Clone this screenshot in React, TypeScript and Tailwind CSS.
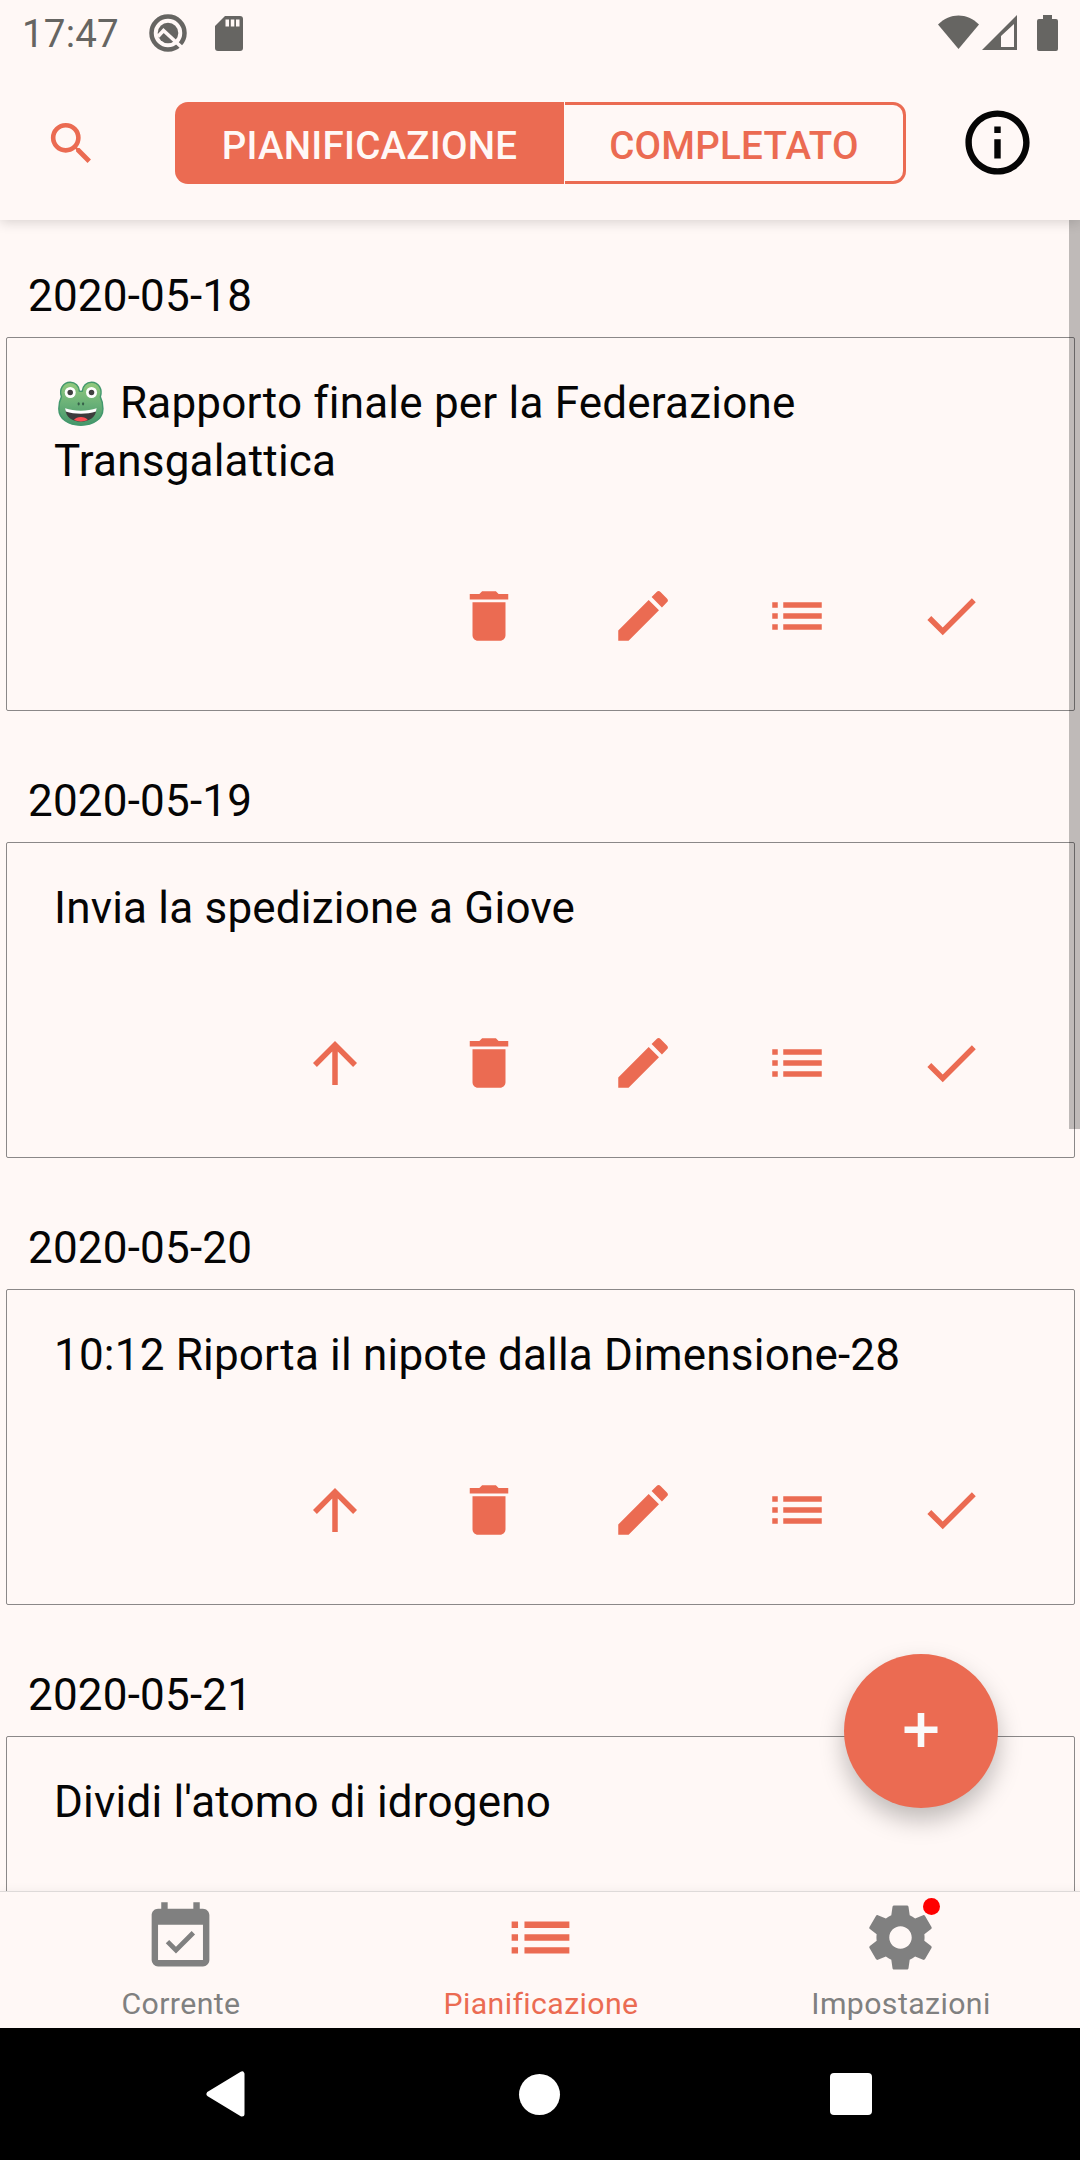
import type { ReactNode } from "react";
import { MdArrowUpward, MdCheck, MdDelete, MdEdit, MdEventAvailable, MdInfoOutline, MdList, MdSearch } from "react-icons/md";

type Task = { date: string; title: string; movable: boolean; frog?: boolean };

const tasks: Task[] = [
  { date: "2020-05-18", title: "Rapporto finale per la Federazione Transgalattica", movable: false, frog: true },
  { date: "2020-05-19", title: "Invia la spedizione a Giove", movable: true },
  { date: "2020-05-20", title: "10:12 Riporta il nipote dalla Dimensione-28", movable: true },
  { date: "2020-05-21", title: "Dividi l'atomo di idrogeno", movable: true },
];

function Frog() {
  return (
    <svg viewBox="0 0 128 128" role="img" aria-label="Rana" className="mr-[16px] ml-[3px] inline-block size-[47px] align-[-9px]">
      <defs>
        <linearGradient id="frog" x1="0" y1="0" x2="0" y2="1">
          <stop offset="0" stopColor="#93ca7d" />
          <stop offset=".5" stopColor="#6ab178" />
          <stop offset="1" stopColor="#45966a" />
        </linearGradient>
      </defs>
      <path d="M36 6C50 6 60 16 61 30C63 31 67 31 69 30C70 16 80 6 94 6c19 0 31 19 24 40 4 8 7 20 7 32 0 28-26 45-60 45S5 106 5 78c0-12 3-24 7-32C5 25 17 6 36 6z" fill="url(#frog)" stroke="#43986d" strokeWidth="4" />
      <circle cx="36" cy="34" r="15" fill="#fff" />
      <circle cx="94" cy="34" r="15" fill="#fff" />
      <circle cx="36" cy="34" r="7.500" fill="#404040" />
      <circle cx="94" cy="34" r="7.500" fill="#404040" />
      <ellipse cx="59" cy="65" rx="3" ry="4.500" fill="#37604a" />
      <ellipse cx="71" cy="65" rx="3" ry="4.500" fill="#37604a" />
      <path d="M23 80c25 9 59 9 84 0-1 21-19 33-42 33S24 101 23 80z" fill="#3c3c3c" />
      <path d="M22 77c25 9 61 9 86 0l-2 9c-24 8-58 8-82 0z" fill="#fff" />
      <path d="M46 109c7-11 31-11 38 0-11 5-27 5-38 0z" fill="#ff4f55" />
    </svg>
  );
}

function TaskItem({ task }: { task: Task }) {
  return (
    <section className="shrink-0">
      <h2 className="flex h-[131px] items-end pb-[12px] pl-[28px] text-[44px] leading-[58px] tracking-[0.2px]">
        {task.date}
      </h2>
      <article className="mr-[5px] ml-[6px] rounded-[2px] border border-[#8b8888] pt-[36px]">
        <p className="mx-[47px] text-[44px] leading-[58px] tracking-[0.2px]">
          {task.frog && <Frog />}
          {task.title}
        </p>
        <div className="mt-[93px] mr-[90px] mb-[61px] flex justify-end gap-[88px] text-[66px] text-[#eb6b52]">
          {task.movable && <MdArrowUpward />}
          <MdDelete />
          <MdEdit />
          <MdList />
          <MdCheck />
        </div>
      </article>
    </section>
  );
}

function SettingsGear() {
  return (
    <svg viewBox="0 0 24 24" fill="currentColor" className="size-[77px]">
      <path d="M19.430 12.980c.04-.32.07-.64.07-.98s-.03-.66-.07-.98l2.110-1.650c.19-.15.24-.42.12-.64l-2-3.460c-.12-.22-.39-.3-.61-.22l-2.490 1c-.52-.4-1.080-.73-1.690-.98l-.38-2.650C14.460 2.180 14.250 2 14 2h-4c-.25 0-.46.18-.49.42l-.38 2.650c-.61.25-1.170.59-1.690.98l-2.490-1c-.23-.09-.49 0-.61.22l-2 3.460c-.13.22-.07.49.12.64l2.110 1.650c-.04.32-.07.65-.07.98s.03.66.07.98l-2.110 1.650c-.19.15-.24.42-.12.64l2 3.460c.12.22.39.3.61.22l2.490-1c.52.4 1.080.73 1.690.98l.38 2.650c.03.24.24.42.49.42h4c.25 0 .46-.18.49-.42l.38-2.650c.61-.25 1.170-.59 1.690-.98l2.490 1c.23.09.49 0 .61-.22l2-3.460c.12-.22.07-.49-.12-.64l-2.110-1.650zM12 15.500c-1.930 0-3.500-1.570-3.500-3.500s1.570-3.500 3.500-3.500 3.500 1.570 3.500 3.500-1.570 3.500-3.500 3.500z" />
    </svg>
  );
}

function Tab({ label, active, badge, children }: { label: string; active?: boolean; badge?: boolean; children: ReactNode }) {
  return (
    <button className={active ? "flex w-[360px] flex-col items-center text-[#eb6b52]" : "flex w-[360px] flex-col items-center text-[#808080]"}>
      <span className="relative mt-[7px] block size-[77px] text-[77px]">
        {children}
        {badge && <i className="absolute -top-px right-0 size-[17px] translate-x-[1px] rounded-full bg-[#ff0000]" />}
      </span>
      <span className="mt-[10px] pl-[2px] text-[30.250px] leading-[36px] tracking-[0.4px]">{label}</span>
    </button>
  );
}

function StatusBar() {
  return (
    <div className="flex h-[66px] items-center pr-[20px] pl-[22px] text-[#666562]">
      <span className="w-[127px] pt-[2px] text-[38.500px] leading-[66px] tracking-[0.2px]">17:47</span>
      <svg viewBox="0 0 38 38" className="size-[38px]">
        <circle cx="19" cy="19" r="16.500" fill="none" stroke="currentColor" strokeWidth="4.500" />
        <circle cx="19" cy="19" r="10.300" fill="currentColor" />
        <path d="M9 22.500L14.500 16.500L34 34.500" fill="none" stroke="#fff8f6" strokeWidth="3.600" />
      </svg>
      <svg viewBox="0 0 28 35" className="ml-[28px] h-[35px] w-[28px]">
        <path d="M10 0h15a3 3 0 0 1 3 3v29a3 3 0 0 1-3 3H3a3 3 0 0 1-3-3V10z" fill="currentColor" />
        <path d="M10.500 3.500h3.500v7h-3.500zM15.800 3.500h3.500v7h-3.500zM21 3.500h3.500v7H21z" fill="#fff8f6" />
      </svg>
      <svg viewBox="0 0 122 38" className="ml-auto h-[38px] w-[122px]" fill="currentColor">
        <path d="M0 10.500C12-1.500 29-1.500 41 10.500L20.500 35z" />
        <path fillRule="evenodd" d="M44 36L79 1v35zM63 33h13V10L63 22z" />
        <path d="M105 1h9v4h4a2 2 0 0 1 2 2v28a2 2 0 0 1-2 2h-17a2 2 0 0 1-2-2V7a2 2 0 0 1 2-2h4z" />
      </svg>
    </div>
  );
}

export default function App() {
  return (
    <div className="flex h-[2160px] w-[1080px] flex-col overflow-hidden bg-[#fff8f6] font-['Roboto',sans-serif] text-[#050505]">
      <header className="relative z-10 h-[220px] shrink-0 bg-[#fff8f6] shadow-[0_2px_12px_rgba(0,0,0,0.16)]">
        <StatusBar />
        <div className="flex h-[154px] items-center pr-[44px] pl-[44px]">
          <MdSearch className="text-[55px] text-[#eb6b52]" />
          <div className="ml-[76px] flex h-[82px] text-[38.500px] font-medium tracking-[0.25px]">
            <button className="w-[389px] rounded-l-[13px] bg-[#eb6b52] pt-[5px] text-[#fff8f6]">PIANIFICAZIONE</button>
            <button className="ml-px w-[341px] rounded-r-[13px] border-[3px] border-l-0 border-[#eb6b52] pt-[5px] text-[#eb6b52]">COMPLETATO</button>
          </div>
          <MdInfoOutline className="ml-auto -translate-y-px text-[77px]" />
        </div>
      </header>

      <main className="relative flex min-h-0 flex-1 flex-col overflow-hidden">
        <div className="-mt-[14px] flex flex-col">
          {tasks.map((task) => (
            <TaskItem key={task.date} task={task} />
          ))}
        </div>
        <div className="absolute top-0 right-0 h-[909px] w-[11px] bg-black/25" />
        <button className="absolute right-[82px] bottom-[83px] flex size-[154px] items-center justify-center rounded-full bg-[#eb6b52] shadow-[0_12px_24px_rgba(0,0,0,0.25)]">
          <svg viewBox="0 0 34 34" className="size-[34px] -translate-y-px" fill="#fafafa">
            <path d="M13.700 0h6.600v34h-6.600z" />
            <path d="M.5 13.500h33v6.500H.5z" />
          </svg>
        </button>
      </main>

      <nav className="relative z-10 flex h-[137px] shrink-0 border-t border-[#dedad9] bg-[#fff8f6] shadow-[0_0_10px_rgba(0,0,0,0.06)]">
        <Tab label="Corrente"><MdEventAvailable /></Tab>
        <Tab label="Pianificazione" active><MdList /></Tab>
        <Tab label="Impostazioni" badge><SettingsGear /></Tab>
      </nav>

      <footer className="relative z-20 flex h-[132px] shrink-0 items-center bg-black pl-[206px]">
        <svg viewBox="0 0 39 46" className="h-[46px] w-[39px]">
          <path d="M3 23L36 3v40z" fill="#fff" stroke="#fff" strokeWidth="5" strokeLinejoin="round" />
        </svg>
        <div className="ml-[274px] size-[41px] rounded-full bg-white" />
        <div className="ml-[270px] size-[42px] rounded-[4px] bg-white" />
      </footer>
    </div>
  );
}
